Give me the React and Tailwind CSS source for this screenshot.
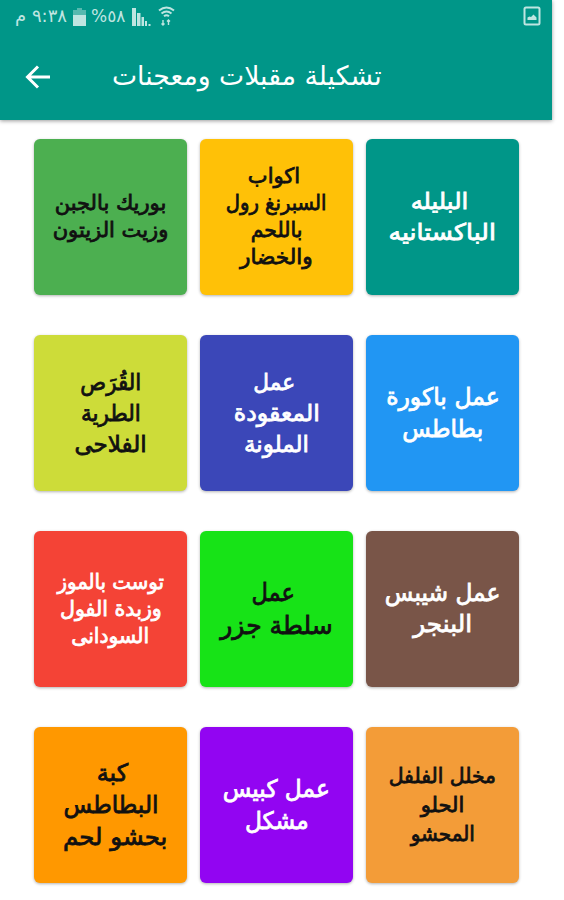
const rows = [
  [
    { bg: 'bg-[#009688]', fg: 'text-white', size: 'text-[23px] leading-[31px]', lines: [['البليله', 'scale-x-[1.05] mr-[7px]'], ['الباكستانيه', 'scale-x-[1.09]']] },
    { bg: 'bg-[#ffc107]', fg: 'text-[#111]', size: 'text-[21px] leading-[27px]', lines: [['اكواب', 'mr-[5px]'], ['السبرنغ رول', 'scale-x-[0.93]'], ['باللحم', 'scale-x-[0.97]'], ['والخضار', 'scale-x-[1.03]']] },
    { bg: 'bg-[#4caf50]', fg: 'text-[#111]', size: 'text-[21px] leading-[27px]', lines: [['بوريك بالجبن', ''], ['وزيت الزيتون', '']] },
  ],
  [
    { bg: 'bg-[#2196f3]', fg: 'text-white', size: 'text-[24px] leading-[32px]', lines: [['عمل باكورة', 'scale-x-[0.98]'], ['بطاطس', 'scale-x-[0.97]']] },
    { bg: 'bg-[#3b47b8]', fg: 'text-white', size: 'text-[23px] leading-[31px]', lines: [['عمل', 'scale-x-[0.94] mr-[5px]'], ['المعقودة', 'scale-x-[1.03]'], ['الملونة', '']] },
    { bg: 'bg-[#cddc39]', fg: 'text-[#111]', size: 'text-[23px] leading-[31px]', lines: [['القُرَص', 'scale-x-[0.93]'], ['الطرية', 'scale-x-[0.94]'], ['الفلاحى', '']] },
  ],
  [
    { bg: 'bg-[#795548]', fg: 'text-white', size: 'text-[24px] leading-[31px]', lines: [['عمل شيبس', 'scale-x-[0.97]'], ['البنجر', 'scale-x-[1.03]']] },
    { bg: 'bg-[#17e317]', fg: 'text-[#111]', size: 'text-[25px] leading-[33px]', lines: [['عمل', 'scale-x-[0.9] mr-[6px]'], ['سلطة جزر', '']] },
    { bg: 'bg-[#f44336]', fg: 'text-white', size: 'text-[21px] leading-[27px]', lines: [['توست بالموز', 'scale-x-[0.94]'], ['وزبدة الفول', 'scale-x-[0.98]'], ['السودانى', 'scale-x-[0.97]']] },
  ],
  [
    { bg: 'bg-[#f39c38]', fg: 'text-[#111]', size: 'text-[21px] leading-[29px]', lines: [['مخلل الفلفل', 'scale-x-[0.97]'], ['الحلو', ''], ['المحشو', 'scale-x-[0.95]']] },
    { bg: 'bg-[#9205f2]', fg: 'text-white', size: 'text-[24px] leading-[32px]', lines: [['عمل كبيس', 'scale-x-[0.97]'], ['مشكل', 'scale-x-[0.97]']] },
    { bg: 'bg-[#ff9800]', fg: 'text-[#111]', size: 'text-[24px] leading-[32px]', lines: [['كبة', 'ml-[4px]'], ['البطاطس', 'scale-x-[0.97]'], ['بحشو لحم', 'scale-x-[1.02] ml-[9px]']] },
  ],
];

function StatusBar() {
  return (
    <div className="flex h-8 items-center justify-between pl-[13px] pr-[11px] text-[#bfe5e1]">
      <div className="flex items-center">
        <span dir="rtl" className="w-[54px] whitespace-nowrap text-[18px] leading-8">٩:٣٨ م</span>
        <svg className="ml-[6px] mt-px" width="13" height="18" viewBox="0 0 13 18" fill="currentColor">
          <path d="M4 0h5v2h4v5H0V2h4z" opacity=".45" />
          <path d="M0 7h13v11H0z" />
        </svg>
        <span dir="ltr" className="ml-[5px] w-[36px] whitespace-nowrap text-[17px] leading-8">%٥٨</span>
        <svg className="ml-[5px] mt-px" width="19" height="18" viewBox="0 0 19 18" fill="currentColor">
          <path d="M0 0h4v18H0zM5 5h3.500v13H5zM9.500 9h2.500v9H9.500zM13 13h2v5h-2zM16.500 16h2v2h-2z" />
        </svg>
        <svg className="ml-[7px]" width="17" height="20" viewBox="0 0 17 20" fill="none" stroke="currentColor" strokeWidth="2">
          <path d="M1 4.500q7.500-6 15 0M3.500 7.500q5-4 10 0M6 10.200q2.500-2 5 0" />
          <path d="M5 14v5M3.500 17.500 5 19l1.500-1.500M10.500 19v-5M9 15.500l1.500-1.500 1.500 1.500" strokeWidth="1.400" />
        </svg>
      </div>
      <svg width="18" height="20" viewBox="0 0 18 20" fill="none" stroke="currentColor" strokeWidth="2">
        <rect x="1.500" y="1.500" width="15" height="17" rx="1.500" />
        <path d="M4.500 14v-2.500l2-1 1.500.5 2.500-2.500 3 3V14z" fill="currentColor" stroke="none" />
      </svg>
    </div>
  );
}

export default function App() {
  return (
    <div className="h-[900px] w-[564px] overflow-hidden bg-white font-['DejaVu_Sans',sans-serif]">
      <header className="h-[120px] w-[552px] bg-[#009688] text-white shadow-[0_1px_4px_rgba(0,0,0,0.4)]">
        <StatusBar />
        <div className="flex h-[88px] items-center pl-[25px]">
          <svg className="mt-[2px]" width="26" height="24" viewBox="0 0 26 24" fill="none" stroke="currentColor" strokeWidth="3">
            <path d="M25 12H3M13 1.500 2.500 12 13 22.500" />
          </svg>
          <h1 className="ml-[61px] whitespace-nowrap text-[26.700px] leading-[40px]" dir="rtl">تشكيلة مقبلات ومعجنات</h1>
        </div>
      </header>
      <main className="flex flex-col gap-[40px] pl-[34px] pt-[19px]">
        {rows.map((row, i) => (
          <div key={i} dir="rtl" className="flex w-[485px] justify-between">
            {row.map((card) => (
              <div key={card.bg} className={`flex h-[156px] w-[153px] flex-col items-center justify-center rounded-md shadow-[0_1px_3px_rgba(0,0,0,0.3)] [-webkit-text-stroke:0.8px_currentColor] ${card.bg} ${card.fg} ${card.size}`}>
                {card.lines.map(([text, fit]) => (
                  <span key={text} className={`whitespace-nowrap ${fit}`}>{text}</span>
                ))}
              </div>
            ))}
          </div>
        ))}
      </main>
    </div>
  );
}
